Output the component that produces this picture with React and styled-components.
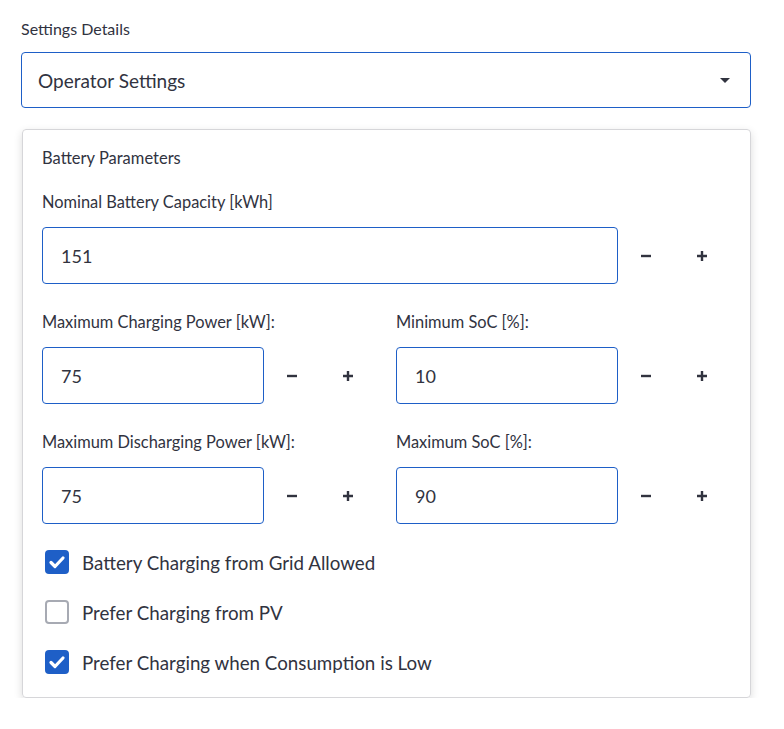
import React from 'react';
import styled, { createGlobalStyle } from 'styled-components';

const Global = createGlobalStyle`
  body {
    margin: 0;
    background: #fff;
    font-family: "Lato", "Noto Sans", sans-serif;
    color: #31333f;
  }
`;

const Page = styled.div`
  width: 730px;
  padding: 17px 0 0 21px;
`;

const TopLabel = styled.div`
  font-size: 16px;
  line-height: 24px;
  margin-bottom: 11px;
`;

const Select = styled.div`
  height: 56px;
  box-sizing: border-box;
  border: 1px solid #1e5fc7;
  border-radius: 4px;
  display: flex;
  align-items: center;
  justify-content: space-between;
  padding: 0 20px 0 16px;
  font-size: 19px;
  margin-bottom: 21px;
`;

const Caret = styled.span`
  width: 0;
  height: 0;
  border-left: 5px solid transparent;
  border-right: 5px solid transparent;
  border-top: 5px solid #31333f;
`;

const Card = styled.div`
  margin-left: 1px;
  border: 1px solid #d6d6d9;
  border-radius: 4px;
  box-shadow: 0 3px 8px rgba(0, 0, 0, 0.14);
  padding: 16px 20px 10px 19px;
`;

const Heading = styled.div`
  font-size: 16.5px;
  line-height: 24px;
  margin-bottom: 20px;
`;

const Label = styled.div`
  font-size: 16.4px;
  line-height: 24px;
  margin-bottom: 13px;
`;

const Grid = styled.div`
  display: grid;
  grid-template-columns: 1fr 1fr;
  column-gap: 20px;
  margin-top: 26px;
`;

const Field = styled.div``;

const NumberRow = styled.div`
  display: flex;
  align-items: center;
`;

const Input = styled.div`
  flex: 1;
  height: 57px;
  box-sizing: border-box;
  border: 1px solid #1e5fc7;
  border-radius: 4px;
  display: flex;
  align-items: center;
  padding-left: 18px;
  font-size: 18px;
`;

const StepButton = styled.button`
  width: 56px;
  height: 57px;
  border: none;
  background: transparent;
  display: flex;
  align-items: center;
  justify-content: center;
  padding: 0;
  color: #31333f;
`;

const Checks = styled.div`
  margin-top: 13px;
`;

const CheckRow = styled.label`
  display: flex;
  align-items: center;
  height: 50px;
  gap: 13px;
  padding-left: 3px;
  font-size: 18.75px;
`;

const Box = styled.span`
  width: 24px;
  height: 24px;
  box-sizing: border-box;
  border-radius: 4px;
  display: flex;
  align-items: center;
  justify-content: center;
  background: ${p => (p.$checked ? '#1e5fc7' : '#fff')};
  border: ${p => (p.$checked ? 'none' : '2px solid #a7aab3')};
`;

const Minus = () => (
  <svg width="12" height="12" viewBox="0 0 12 12">
    <path d="M1 6h10" stroke="currentColor" strokeWidth="2.4" />
  </svg>
);

const Plus = () => (
  <svg width="12" height="12" viewBox="0 0 12 12">
    <path d="M1 6h10M6 1v10" stroke="currentColor" strokeWidth="2.4" />
  </svg>
);

const Tick = () => (
  <svg width="18" height="18" viewBox="0 0 18 18">
    <path d="M3 9.5l4 4 8-8.5" fill="none" stroke="#fff" strokeWidth="3.2" strokeLinecap="round" strokeLinejoin="round" />
  </svg>
);

const NumberInput = ({ value }) => (
  <NumberRow>
    <Input>{value}</Input>
    <StepButton><Minus /></StepButton>
    <StepButton><Plus /></StepButton>
  </NumberRow>
);

const fields = [
  ['Maximum Charging Power [kW]:', 75],
  ['Minimum SoC [%]:', 10],
  ['Maximum Discharging Power [kW]:', 75],
  ['Maximum SoC [%]:', 90],
];

const checks = [
  ['Battery Charging from Grid Allowed', true],
  ['Prefer Charging from PV', false],
  ['Prefer Charging when Consumption is Low', true],
];

const App = () => (
  <Page>
    <Global />
    <TopLabel>Settings Details</TopLabel>
    <Select>
      <span>Operator Settings</span>
      <Caret />
    </Select>
    <Card>
      <Heading>Battery Parameters</Heading>
      <Label>Nominal Battery Capacity [kWh]</Label>
      <NumberInput value={151} />
      <Grid>
        {fields.slice(0, 2).map(([l, v]) => (
          <Field key={l}>
            <Label>{l}</Label>
            <NumberInput value={v} />
          </Field>
        ))}
      </Grid>
      <Grid>
        {fields.slice(2).map(([l, v]) => (
          <Field key={l}>
            <Label>{l}</Label>
            <NumberInput value={v} />
          </Field>
        ))}
      </Grid>
      <Checks>
        {checks.map(([l, c]) => (
          <CheckRow key={l}>
            <Box $checked={c}>{c && <Tick />}</Box>
            {l}
          </CheckRow>
        ))}
      </Checks>
    </Card>
  </Page>
);

export default App;
